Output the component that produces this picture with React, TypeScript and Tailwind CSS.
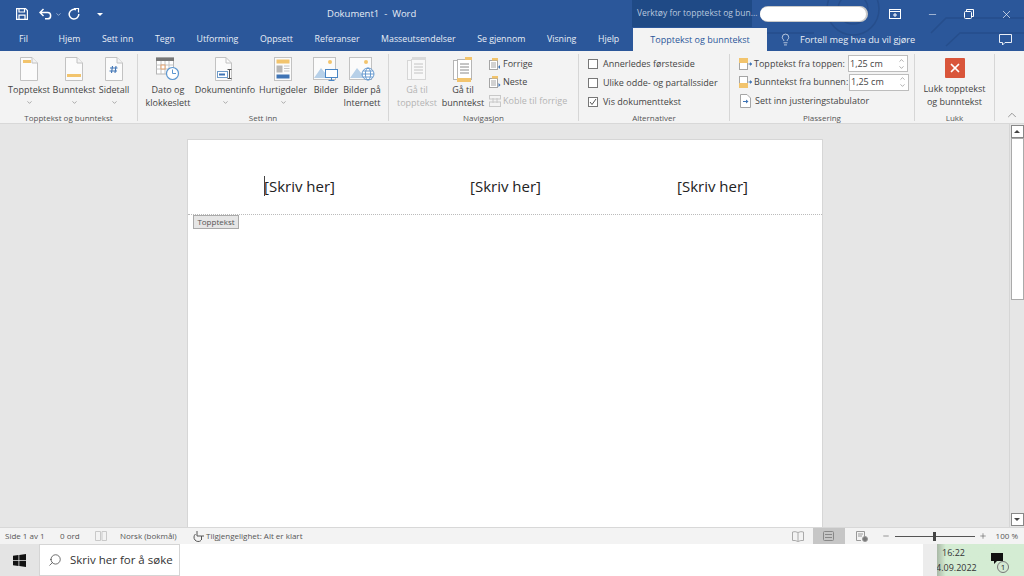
import type { ReactNode } from "react";
import { ChevronDown, ChevronUp, Lightbulb, Minus, Plus, Search, X } from "lucide-react";

const tabs = [
  { label: "Fil", className: "mr-[9px]" },
  { label: "Hjem", className: "" },
  { label: "Sett inn", className: "" },
  { label: "Tegn", className: "" },
  { label: "Utforming", className: "" },
  { label: "Oppsett", className: "" },
  { label: "Referanser", className: "" },
  { label: "Masseutsendelser", className: "" },
  { label: "Se gjennom", className: "" },
  { label: "Visning", className: "" },
  { label: "Hjelp", className: "" },
];

function PageIcon({ band }: { band: "top" | "bottom" | "hash" }) {
  return (
    <svg width="18" height="24" viewBox="0 0 18 24" fill="none">
      <path d="M0.5 0.5H12L17.5 6V23.5H0.5Z" fill="#fbfbfb" stroke="#c2c2c2" />
      <path d="M12 0.5V6H17.5" stroke="#c2c2c2" fill="#f3f3f3" />
      {band === "top" && <rect x="3" y="3" width="8" height="3" fill="#f2c46d" />}
      {band === "bottom" && <rect x="2" y="17" width="14" height="3" fill="#f2c46d" />}
      {band === "hash" && (
        <path d="M7.5 9L6.5 16M11 9L10 16M5 11H12.5M4.5 14H12" stroke="#3f74b5" strokeWidth="1.1" />
      )}
    </svg>
  );
}

function PictureIcon({ kind }: { kind: "screen" | "globe" }) {
  return (
    <svg width="26" height="24" viewBox="0 0 26 24" fill="none">
      <rect x="0.5" y="0.5" width="22" height="22" fill="#fbfbfb" stroke="#c2c2c2" />
      <circle cx="17" cy="5" r="2" fill="#f2c46d" />
      <path d="M1 21L8 11L13 17L15 15L20 21Z" fill="#b7d0e8" />
      {kind === "screen" ? (
        <g>
          <rect x="12.5" y="12.5" width="12" height="8" fill="#fff" stroke="#4a86c5" />
          <path d="M18.5 21V23M15.5 23.5H21.5" stroke="#4a86c5" />
        </g>
      ) : (
        <g stroke="#4a86c5" strokeWidth="0.8">
          <circle cx="19" cy="17" r="6" fill="#fff" />
          <ellipse cx="19" cy="17" rx="2.6" ry="6" />
          <path d="M13 17H25M14 14H24M14 20H24" />
        </g>
      )}
    </svg>
  );
}

function CalendarIcon() {
  return (
    <svg width="24" height="24" viewBox="0 0 24 24" fill="none">
      <rect x="0.5" y="1" width="17" height="16" fill="#fff" stroke="#b5b5b5" />
      <rect x="0" y="0.5" width="18" height="3.5" fill="#777" />
      <path d="M0.5 8H17.5M0.5 12H17.5M5 4V17M9 4V17M13 4V17" stroke="#c4c4c4" />
      <rect x="5" y="8" width="4" height="4" fill="#fff" stroke="#e2a06c" />
      <circle cx="16.5" cy="16.5" r="6" fill="#fff" stroke="#5b96d0" strokeWidth="1.2" />
      <path d="M16.5 12.5V16.5H20" stroke="#5b96d0" />
    </svg>
  );
}

function DocInfoIcon() {
  return (
    <svg width="20" height="24" viewBox="0 0 20 24" fill="none">
      <path d="M0.5 0.5H11L16.5 6V23.5H0.5Z" fill="#fbfbfb" stroke="#c2c2c2" />
      <path d="M11 0.5V6H16.5" stroke="#c2c2c2" />
      <rect x="2.5" y="14.5" width="10" height="6" fill="#fff" stroke="#6e9bc9" />
      <rect x="4" y="16.5" width="6" height="2" fill="#3f74b5" />
      <path d="M12.5 12.5H16.5M14.5 12.5V21.5M12.5 21.5H16.5" stroke="#555" />
    </svg>
  );
}

function QuickPartsIcon() {
  return (
    <svg width="18" height="24" viewBox="0 0 18 24" fill="none">
      <rect x="0.5" y="0.5" width="17" height="23" fill="#fbfbfb" stroke="#c2c2c2" />
      <rect x="2.5" y="2.5" width="13" height="4" fill="#f2c46d" />
      <rect x="2.5" y="8.5" width="6" height="7" fill="#b5b5b5" />
      <path d="M10 9H15.5M10 11.5H15.5M10 14H15.5" stroke="#c4c4c4" />
      <rect x="2.5" y="17.5" width="13" height="4" fill="#3f74b5" />
    </svg>
  );
}

function GoToIcon({ variant }: { variant: "header" | "footer" }) {
  const disabled = variant === "header";
  return (
    <svg width="20" height="26" viewBox="0 0 20 26" fill="none" opacity={disabled ? 0.45 : 1}>
      <rect x="0.5" y="3.5" width="14" height="19" fill="#fff" stroke="#b5b5b5" />
      <rect x="4.5" y="2.5" width="14" height="20" fill="#fff" stroke="#b5b5b5" />
      <path d="M7 7H16M7 10H16M7 13H16M7 16H16" stroke="#8a8a8a" />
      {disabled ? (
        <rect x="5" y="0" width="14" height="3" fill="#bdbdbd" />
      ) : (
        <g>
          <rect x="12" y="0" width="7" height="3" fill="#f2c46d" />
          <rect x="4" y="21" width="14" height="4" fill="#f2c46d" />
        </g>
      )}
    </svg>
  );
}

function NavIcon({ kind }: { kind: "prev" | "next" | "link" }) {
  if (kind === "link") {
    return (
      <svg width="12" height="12" viewBox="0 0 12 12" fill="none" stroke="#c8c8c8">
        <rect x="0.5" y="0.5" width="11" height="3.5" />
        <rect x="0.5" y="7" width="11" height="4.5" />
        <path d="M4 3V8M8 3V8" />
      </svg>
    );
  }
  return (
    <svg width="12" height="12" viewBox="0 0 12 12" fill="none">
      <rect x="0.5" y="2.5" width="8" height="9" fill="#fff" stroke="#a5a5a5" />
      <rect x="3" y="0" width="6" height="2.5" fill="#f2c46d" />
      <path d="M2 5H7M2 7H7M2 9H7" stroke="#a5a5a5" />
      <path d={kind === "prev" ? "M11 7V11L9 9Z" : "M9.5 7V11L11.5 9Z"} fill="#3f74b5" />
    </svg>
  );
}

function BarIcon({ top }: { top: boolean }) {
  return (
    <svg width="13" height="12" viewBox="0 0 13 12" fill="none">
      <rect x="0.5" y="0.5" width="8" height="11" fill="#fff" stroke="#a5a5a5" />
      <rect x="0" y={top ? 0 : 7} width="9" height="5" fill="#f2c46d" />
      <path d="M9.5 6H13" stroke="#3f74b5" />
      <path d="M11 4V8L13 6Z" fill="#3f74b5" />
    </svg>
  );
}

function TabStopIcon() {
  return (
    <svg width="11" height="14" viewBox="0 0 11 14" fill="none">
      <path d="M0.5 0.5H7L10.5 4V13.5H0.5Z" fill="#fff" stroke="#a5a5a5" />
      <path d="M3 7.5H7" stroke="#3f74b5" />
      <path d="M6 5.5V9.5L8.5 7.5Z" fill="#3f74b5" />
    </svg>
  );
}

function BigButton({
  width,
  icon,
  label,
  caret,
  disabled,
}: {
  width: string;
  icon: ReactNode;
  label: ReactNode;
  caret?: boolean;
  disabled?: boolean;
}) {
  return (
    <div className={`flex shrink-0 flex-col items-center ${width}`}>
      <div className="flex h-[26px] shrink-0 items-start justify-center">{icon}</div>
      <div className={`whitespace-nowrap text-center leading-[13px] ${disabled ? "text-[#b4b4b4]" : "text-[#444]"}`}>{label}</div>
      {caret && <ChevronDown size={7} strokeWidth={2} className="mt-[3px] shrink-0 text-[#777]" />}
    </div>
  );
}

function Group({ width, label, children }: { width: string; label: string; children: ReactNode }) {
  return (
    <div className={`flex h-[67px] shrink-0 flex-col border-r border-[#d6d6d6] ${width}`}>
      <div className="flex h-[57px] shrink-0">{children}</div>
      <div className="h-[14px] shrink-0 whitespace-nowrap text-center text-[8px] leading-[14px] text-[#555]">{label}</div>
    </div>
  );
}

function CheckRow({ label, checked }: { label: string; checked?: boolean }) {
  return (
    <div className="flex h-[19px] shrink-0 items-center whitespace-nowrap">
      <span className="flex h-[10px] w-[10px] items-center justify-center border border-[#777] bg-white">
        {checked && (
          <svg width="8" height="8" viewBox="0 0 8 8" fill="none" stroke="#555">
            <path d="M1 4L3 6.5L7 1" />
          </svg>
        )}
      </span>
      <span className="ml-[5px]">{label}</span>
    </div>
  );
}

function SpinBox() {
  return (
    <div className="flex h-[17px] w-[60px] shrink-0 items-center justify-between border border-[#bdbdbd] bg-white pl-[1px] pr-[2px]">
      <span>1,25 cm</span>
      <span className="flex flex-col text-[#777]">
        <ChevronUp size={7} />
        <ChevronDown size={7} />
      </span>
    </div>
  );
}

export default function App() {
  return (
    <div className="flex h-[576px] w-[1024px] flex-col overflow-hidden bg-white font-['Open_Sans',sans-serif] text-[9px] text-[#444]">
      {/* title bar + tabs */}
      <div className="relative h-[51px] shrink-0 bg-[#2b579a] text-white">
        <svg className="absolute right-0 top-0" width="270" height="51" viewBox="0 0 270 51" fill="none" stroke="#264e8c" strokeWidth="1.5">
          <circle cx="99" cy="9" r="26" />
          <circle cx="99" cy="9" r="15" />
          <path d="M177 33L192 18H270M192 46L206 33H270M10 33H60" />
        </svg>
        <div className="relative flex h-[28px] items-center">
          <div className="flex w-[632px] items-center">
            <svg className="ml-[16px]" width="12" height="12" viewBox="0 0 12 12" fill="none" stroke="#fff" strokeWidth="1.2">
              <path d="M0.6 0.6H9.5L11.4 2.5V11.4H0.6Z" />
              <path d="M3 0.6V4H8.5V0.6M3 11.4V7.2H9V11.4" />
            </svg>
            <svg className="ml-[11px]" width="13" height="12" viewBox="0 0 13 12" fill="none" stroke="#fff" strokeWidth="1.5">
              <path d="M4.5 1L1 4.5L4.5 8M1 4.5H8.5A3 3 0 0 1 8.5 10.8H6" />
            </svg>
            <ChevronDown size={7} className="ml-[3px] text-[#d5e0ef]" />
            <svg className="ml-[6px]" width="12" height="12" viewBox="0 0 12 12" fill="none" stroke="#fff" strokeWidth="1.5">
              <path d="M8 1.8A4.8 4.8 0 1 0 10.8 6" />
              <path d="M6 0.5H10.5V4.5" strokeWidth="1.2" />
            </svg>
            <span className="ml-[17px] h-0 w-0 border-x-[3px] border-t-[3px] border-x-transparent border-t-white" />
            <span className="ml-[224px] whitespace-nowrap text-[9.5px] text-[#e6ecf5]">Dokument1&nbsp; -&nbsp; Word</span>
          </div>
          <div className="flex h-[27px] w-[120px] items-center self-start bg-[#1f4a86] pl-[5px] text-[8.5px] text-[#b9c8de]">
            <span className="whitespace-nowrap">Verktøy for topptekst og bun...</span>
          </div>
          <div className="ml-[8px] h-[14px] w-[106px] rounded-full bg-white shadow-[1px_0_0_1px_#c9c9c9]" />
          <svg className="ml-[23px]" width="12" height="10" viewBox="0 0 12 10" fill="none" stroke="#fff">
            <rect x="0.5" y="0.5" width="11" height="9" />
            <path d="M0.5 2.5H11.5M6 4V8M4 6H8" />
          </svg>
          <Minus size={11} className="ml-[26px]" strokeWidth={1.2} />
          <svg className="ml-[26px]" width="10" height="10" viewBox="0 0 10 10" fill="none" stroke="#fff">
            <rect x="0.5" y="2.5" width="7" height="7" rx="1" />
            <path d="M2.5 2.5V0.5H9.5V7.5H7.5" />
          </svg>
          <X size={13} className="ml-[26px]" strokeWidth={1.2} />
        </div>
        <div className="relative flex h-[23px] items-center pl-[19px] text-[9px]">
          <div className="flex w-[614px] gap-[21.6px] text-[8.8px]">
            {tabs.map((tab) => (
              <span key={tab.label} className={`whitespace-nowrap text-[#e9eef6] ${tab.className}`}>
                {tab.label}
              </span>
            ))}
          </div>
          <div className="flex h-[24px] w-[134px] items-center justify-center self-start whitespace-nowrap bg-[#f3f3f3] text-[#2b579a]">
            Topptekst og bunntekst
          </div>
          <Lightbulb size={13} strokeWidth={1.2} className="ml-[12px]" />
          <span className="ml-[8px] whitespace-nowrap text-[9.2px] text-[#e9eef6]">Fortell meg hva du vil gjøre</span>
          <svg className="ml-[84px]" width="13" height="12" viewBox="0 0 13 12" fill="none" stroke="#e9eef6">
            <path d="M0.5 0.5H12.5V8.5H6L3.5 11V8.5H0.5Z" />
          </svg>
        </div>
      </div>

      {/* ribbon */}
      <div className="relative flex h-[73px] shrink-0 items-start border-b border-[#d8d8d8] bg-[#f3f3f3] pt-[3px]">
        <Group width="w-[138px]" label="Topptekst og bunntekst">
          <div className="flex pl-[7px] pt-[3px]">
            <BigButton width="w-[44px]" icon={<PageIcon band="top" />} label="Topptekst" caret />
            <BigButton width="w-[46px]" icon={<PageIcon band="bottom" />} label="Bunntekst" caret />
            <BigButton width="w-[34px]" icon={<PageIcon band="hash" />} label="Sidetall" caret />
          </div>
        </Group>
        <Group width="w-[251px]" label="Sett inn">
          <div className="flex pl-[7px] pt-[3px]">
            <BigButton width="w-[46px]" icon={<CalendarIcon />} label={<>Dato og<br />klokkeslett</>} />
            <BigButton width="w-[68px]" icon={<DocInfoIcon />} label="Dokumentinfo" caret />
            <BigButton width="w-[48px]" icon={<QuickPartsIcon />} label="Hurtigdeler" caret />
            <BigButton width="w-[38px]" icon={<PictureIcon kind="screen" />} label="Bilder" />
            <BigButton width="w-[34px]" icon={<PictureIcon kind="globe" />} label={<>Bilder på<br />Internett</>} />
          </div>
        </Group>
        <Group width="w-[190px]" label="Navigasjon">
          <div className="flex pl-[7px] pt-[3px]">
            <BigButton width="w-[42px]" icon={<GoToIcon variant="header" />} label={<>Gå til<br />topptekst</>} disabled />
            <BigButton width="w-[50px]" icon={<GoToIcon variant="footer" />} label={<>Gå til<br />bunntekst</>} />
            <div className="-mt-[3px] flex flex-col pl-[1px] whitespace-nowrap">
              <div className="flex h-[19px] shrink-0 items-center gap-[2px]"><NavIcon kind="prev" />Forrige</div>
              <div className="flex h-[18px] shrink-0 items-center gap-[2px]"><NavIcon kind="next" />Neste</div>
              <div className="flex h-[19px] shrink-0 items-center gap-[2px] text-[#b4b4b4]"><NavIcon kind="link" />Koble til forrige</div>
            </div>
          </div>
        </Group>
        <Group width="w-[151px]" label="Alternativer">
          <div className="flex flex-col pl-[9px]">
            <CheckRow label="Annerledes førsteside" />
            <CheckRow label="Ulike odde- og partallssider" />
            <CheckRow label="Vis dokumenttekst" checked />
          </div>
        </Group>
        <Group width="w-[185px]" label="Plassering">
          <div className="flex flex-col pl-[9px] whitespace-nowrap">
            <div className="flex h-[19px] shrink-0 items-center"><BarIcon top /><span className="ml-[2px] w-[94px]">Topptekst fra toppen:</span><SpinBox /></div>
            <div className="flex h-[18px] shrink-0 items-center"><BarIcon top={false} /><span className="ml-[2px] w-[95px]">Bunntekst fra bunnen:</span><SpinBox /></div>
            <div className="flex h-[19px] shrink-0 items-center gap-[4px] pl-[1px]"><TabStopIcon />Sett inn justeringstabulator</div>
          </div>
        </Group>
        <Group width="w-[80px]" label="Lukk">
          <div className="flex w-full flex-col items-center pt-[4px]">
            <div className="flex h-[20px] w-[20px] shrink-0 items-center justify-center rounded-[1px] bg-[#d9553a]">
              <X size={14} strokeWidth={3} className="text-white" />
            </div>
            <div className="mt-[4px] whitespace-nowrap text-center leading-[13px]">Lukk topptekst<br />og bunntekst</div>
          </div>
        </Group>
        <ChevronUp size={14} strokeWidth={1} className="absolute bottom-[1px] right-[5px] text-[#555]" />
      </div>

      {/* document area */}
      <div className="flex min-h-0 flex-1 bg-[#e6e6e6]">
        <div className="flex-1 pl-[187px] pt-[15px]">
          <div className="h-full w-[636px] border-x border-t border-[#d6d6d6] bg-white">
            <div className="flex h-[75px] items-end border-b border-dotted border-[#bbb] pb-[18px] pl-[76px] text-[15px] leading-[20px] text-[#222]">
              <div className="relative w-[206px]">
                <span className="absolute left-0 top-0 h-[20px] w-px bg-[#444]" />
                [Skriv her]
              </div>
              <div className="w-[207px]">[Skriv her]</div>
              <div>[Skriv her]</div>
            </div>
            <div className="ml-[5px] flex h-[14px] w-[46px] items-center justify-center border border-[#aaa] bg-[#e6e6e6] text-[8px] text-[#555]">
              Topptekst
            </div>
          </div>
        </div>
        <div className="flex w-[15px] shrink-0 flex-col items-center border-l border-[#d6d6d6] bg-[#e6e6e6] pt-[1px]">
          <div className="flex h-[13px] w-[13px] items-center justify-center border border-[#888] bg-white">
            <span className="h-0 w-0 border-x-[3px] border-b-[3px] border-x-transparent border-b-[#444]" />
          </div>
          <div className="h-[162px] w-[13px] border border-[#aaa] bg-white" />
          <div className="flex-1" />
          <div className="mb-[1px] flex h-[13px] w-[13px] items-center justify-center border border-[#888] bg-white">
            <span className="h-0 w-0 border-x-[3px] border-t-[3px] border-x-transparent border-t-[#444]" />
          </div>
        </div>
      </div>

      {/* status bar */}
      <div className="flex h-[17px] shrink-0 items-center whitespace-nowrap border-t border-[#d8d8d8] bg-[#f3f3f3] text-[8px] text-[#555]">
        <span className="ml-[5px] w-[55px]">Side 1 av 1</span>
        <span className="w-[35px]">0 ord</span>
        <svg width="12" height="10" viewBox="0 0 12 10" fill="none" stroke="#c9c9c9">
          <path d="M0.5 0.5H5.5V9.5H0.5ZM7 0.5H11.5V9.5H7Z" />
        </svg>
        <span className="ml-[13px] w-[73px]">Norsk (bokmål)</span>
        <svg className="mr-[1px]" width="12" height="12" viewBox="0 0 12 12" fill="none" stroke="#555">
          <path d="M4 1V6H8.5V10M2.5 4A4 4 0 1 0 8 10.5M8.5 6H11" />
        </svg>
        <span>Tilgjengelighet: Alt er klart</span>
        <div className="ml-auto flex h-full items-center">
          <svg width="12" height="11" viewBox="0 0 12 11" fill="none" stroke="#aaa">
            <path d="M6 1.5V10.5M6 1.5Q3 0 0.5 1V9.5Q3 9 6 10.5Q9 9 11.5 9.5V1Q9 0 6 1.5Z" />
          </svg>
          <div className="ml-[9px] flex h-full w-[32px] items-center justify-center bg-[#c6c6c6]">
            <svg width="11" height="10" viewBox="0 0 11 10" fill="none" stroke="#888">
              <rect x="0.5" y="0.5" width="10" height="9" rx="1" />
              <path d="M2 3.5H9M2 6.5H9" />
            </svg>
          </div>
          <svg className="ml-[11px]" width="12" height="11" viewBox="0 0 12 11" fill="none" stroke="#999">
            <path d="M0.5 0.5H8.5V7M0.5 0.5V9.5H5M2 3H7M2 5H6" />
            <circle cx="9" cy="8" r="2.5" fill="#777" />
          </svg>
          <Minus size={8} className="ml-[14px] text-[#666]" />
          <div className="relative ml-[5px] h-px w-[80px] bg-[#555]">
            <span className="absolute left-[38px] top-[-4px] h-[9px] w-[3px] bg-[#444]" />
          </div>
          <Plus size={8} className="ml-[4px] text-[#666]" />
          <span className="ml-[9px] mr-[6px]">100 %</span>
        </div>
      </div>

      {/* taskbar */}
      <div className="flex h-[32px] shrink-0 bg-white text-[#333]">
        <div className="flex w-[39px] items-center justify-center bg-[#e4e4e4]">
          <svg width="13" height="13" viewBox="0 0 13 13" fill="#111">
            <path d="M0 1.8L5.5 1V6.2H0ZM6.3 0.9L13 0V6.2H6.3ZM0 7H5.5V12L0 11.2ZM6.3 7H13V13L6.3 12.1Z" />
          </svg>
        </div>
        <div className="flex w-[141px] items-center border border-[#d5d5d5] pl-[8px] text-[11.5px]">
          <Search size={14} strokeWidth={1.2} className="-scale-x-100" />
          <span className="ml-[8px] whitespace-nowrap">Skriv her for å søke</span>
        </div>
        <div className="flex-1" />
        <div className="w-[14px] bg-[#ececec]" />
        <div className="flex w-[87px] overflow-hidden bg-gradient-to-r from-[#a9b8a6] from-0% to-[#d4ecd3] to-10% text-[9px]">
          <div className="ml-[-1px] flex w-[41px] flex-col items-start justify-center leading-[15px] text-[#333]">
            <span className="pl-[6px]">16:22</span>
            <span className="whitespace-nowrap">4.09.2022</span>
          </div>
          <div className="relative ml-[14px] mt-[9px] h-[14px] w-[12px]">
            <svg width="12" height="12" viewBox="0 0 12 12" fill="#111">
              <path d="M0 0H12V8H6L3 11V8H0Z" />
            </svg>
            <span className="absolute left-[6px] top-[8px] flex h-[12px] w-[12px] items-center justify-center rounded-full border border-[#777] bg-[#d4e8d3] text-[8px] text-[#222]">
              1
            </span>
          </div>
        </div>
      </div>
    </div>
  );
}
